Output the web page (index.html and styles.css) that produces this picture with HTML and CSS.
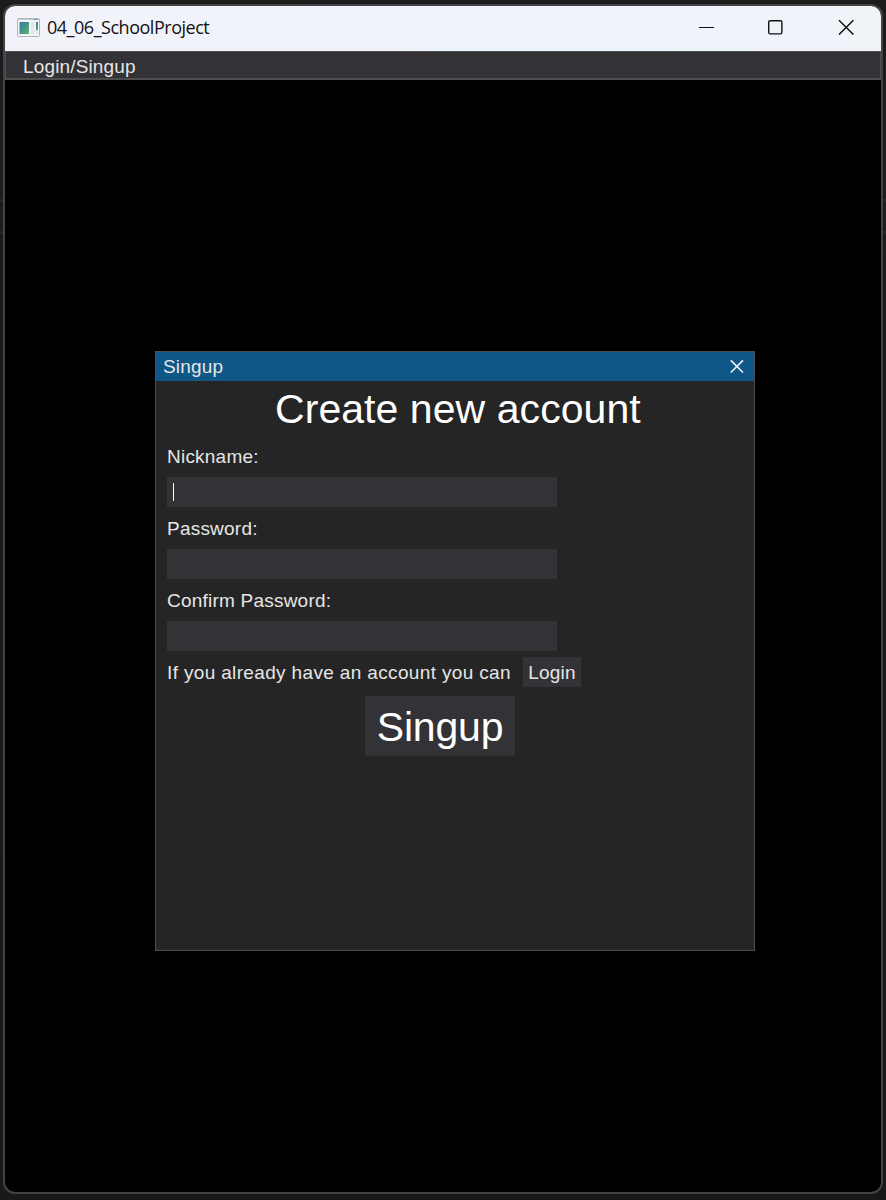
FILE: index.html
```html
<!DOCTYPE html>
<html lang="en">
<head>
<meta charset="utf-8">
<title>04_06_SchoolProject</title>
<link rel="stylesheet" href="styles.css">
</head>
<body>
<main class="window">
  <header class="titlebar">
    <svg class="app-icon" width="23" height="19" viewBox="0 0 23 19">
      <defs><linearGradient id="screen" x1="0" y1="0" x2="1" y2="1"><stop offset="0" stop-color="#4176a0"/><stop offset=".5" stop-color="#429587"/><stop offset="1" stop-color="#67b56f"/></linearGradient></defs>
      <rect x=".5" y=".5" width="22" height="18" rx="1" fill="#f2f4f5" stroke="#adb5be"/>
      <path d="M1 1.5h21" stroke="#c6cdd7"/>
      <path d="M16 1.5h5" stroke="#8e9db3"/>
      <rect x="2.5" y="4" width="9.5" height="12" fill="url(#screen)"/>
      <rect x="14" y="4" width="3.5" height="7" fill="#e3e4e3"/>
      <rect x="14" y="12" width="3.5" height="4" fill="#e1e2e1"/>
      <rect x="19" y="4" width="2" height="8" fill="url(#screen)"/>
      <rect x="19" y="12" width="2" height="4" fill="#e1e3e4"/>
    </svg>
    <span class="caption">04_06_SchoolProject</span>
    <svg class="controls" width="157" height="16" viewBox="0 0 157 16" fill="none" stroke="#111" stroke-width="1.4">
      <path d="M0 8.5h15" stroke-width="1"/>
      <rect x="69.7" y="1.7" width="13.2" height="13.2" rx="1.6"/>
      <path d="M140 1.2l14.4 14.4M154.4 1.2L140 15.6"/>
    </svg>
  </header>
  <nav class="menubar">Login/Singup</nav>
  <div class="workspace">
    <section class="dialog">
      <div class="dialog-title"><span>Singup</span>
        <svg width="14" height="14" viewBox="0 0 14 14" stroke="#e6edf2" stroke-width="1.7"><path d="M.8 .3l12.2 12.2M13 .3L.8 12.5"/></svg>
      </div>
      <div class="form">
        <h1 class="heading">Create new account</h1>
        <div class="label">Nickname:</div>
        <div class="field"><i class="caret"></i></div>
        <div class="label">Password:</div>
        <div class="field"></div>
        <div class="label">Confirm Password:</div>
        <div class="field"></div>
        <div class="login-row"><span class="prompt">If you already have an account you can</span><button class="login">Login</button></div>
        <button class="submit">Singup</button>
      </div>
    </section>
  </div>
</main>
</body>
</html>
```
FILE: styles.css
```css
* { box-sizing: border-box; }
body {
  margin: 0;
  height: 1200px;
  padding: 4px 3px 6px;
  overflow: hidden;
  background: linear-gradient(#1c1c1c 0 199px, #272727 199px 202px, #1c1c1c 202px 231px, #272727 231px 234px, #1b1b1b 234px, #191717);
  font-family: "Liberation Sans", Arial, sans-serif;
  font-size: 19px;
  color: #e6e6e6;
}
button {
  border: 0;
  padding: 2px 0 0;
  font: inherit;
  color: inherit;
  background: #333337;
}
.window {
  display: flex;
  flex-direction: column;
  height: 1190px;
  border: 2px solid #434343;
  border-radius: 12px;
  overflow: hidden;
  background: #000;
}
.titlebar {
  display: flex;
  align-items: center;
  height: 45px;
  padding: 0 25px 3px 12px;
  background: linear-gradient(90deg, #f2f3f9, #eef3fc 70%, #f0f3f8);
  color: #111;
}
.caption {
  margin-left: 7px;
  font: 18px "Open Sans", sans-serif;
  letter-spacing: -0.48px;
}
.controls { margin-left: auto; }
.menubar {
  height: 29px;
  padding-left: 17px;
  border: 1px solid #4e4e4e;
  border-bottom-width: 2px;
  background: #333337;
  line-height: 30px;
  letter-spacing: 0.15px;
}
.workspace { padding: 271px 0 0 150px; }
.dialog {
  width: 600px;
  height: 600px;
  border: 1px solid #4e4e4e;
  background: #252525;
}
.dialog-title {
  display: flex;
  align-items: center;
  justify-content: space-between;
  height: 29px;
  padding: 0 10px 0 7px;
  background: #0f5787;
  letter-spacing: 0.2px;
}
.form {
  display: flex;
  flex-direction: column;
  align-items: flex-start;
  padding-left: 11px;
}
.heading {
  margin: 5px 0 12px 108px;
  font-size: 41px;
  font-weight: 400;
  line-height: 46px;
  letter-spacing: 0.06px;
  color: #fff;
}
.label {
  height: 33px;
  line-height: 25px;
  letter-spacing: 0.22px;
}
.field {
  width: 390px;
  height: 30px;
  margin-bottom: 9px;
  padding: 6px;
  background: #333337;
}
.caret {
  display: block;
  width: 1px;
  height: 18px;
  background: #fff;
}
.login-row {
  display: flex;
  align-items: center;
  margin-top: -3px;
}
.prompt {
  width: 356px;
  padding-top: 2px;
  letter-spacing: 0.35px;
}
.login {
  width: 58px;
  height: 30px;
  letter-spacing: 0.2px;
}
.submit {
  width: 150px;
  height: 60px;
  margin: 9px 0 0 198px;
  font-size: 41px;
  letter-spacing: -0.2px;
  color: #fff;
}
```
